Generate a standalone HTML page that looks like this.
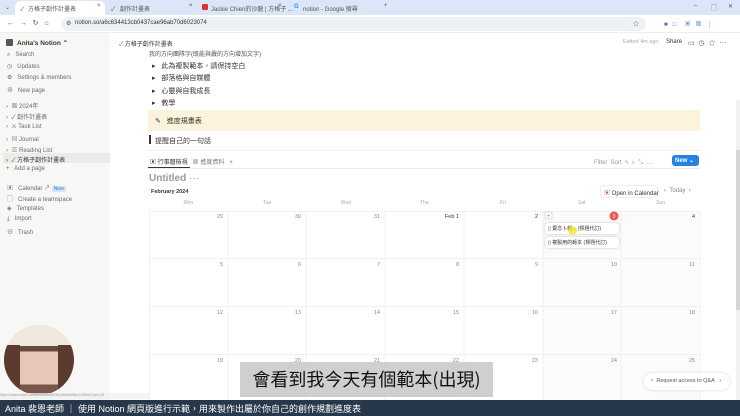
<!DOCTYPE html>
<html><head><meta charset="utf-8">
<style>
*{margin:0;padding:0;box-sizing:border-box}
body{width:740px;height:416px;overflow:hidden;position:relative;background:#fff;font-family:"Liberation Sans","Noto Sans CJK TC",sans-serif;color:#37352f}
.a{position:absolute}
.t{font-size:6px;color:#555;white-space:nowrap}
.s{font-size:6px;color:#6b6b6b;white-space:nowrap}
.m{font-size:7px;color:#37352f;white-space:nowrap}
</style></head><body>
<div class="a" style="left:0;top:0;width:740px;height:15px;background:#dbe6f8"></div>
<div class="a t" style="left:5px;top:4px">⌄</div>
<div class="a" style="left:15px;top:1px;width:90px;height:14px;background:#fff;border-radius:5px 5px 0 0"></div>
<div class="a t" style="left:20px;top:4px;color:#c44">✓</div>
<div class="a t" style="left:28px;top:4px">方格子創作計畫表</div>
<div class="a t" style="left:97px;top:3px">×</div>
<div class="a t" style="left:111px;top:4px">✓</div>
<div class="a t" style="left:120px;top:4px">創作計畫表</div>
<div class="a t" style="left:189px;top:3px">×</div>
<div class="a" style="left:202px;top:4px;width:6px;height:6px;background:#d33;border-radius:1px"></div>
<div class="a t" style="left:211px;top:4px">Jackie Chien的沙龍 | 方格子 ...</div>
<div class="a t" style="left:278px;top:3px">×</div>
<div class="a t" style="left:294px;top:4px;color:#4285f4;font-weight:bold">G</div>
<div class="a t" style="left:303px;top:4px">notion - Google 搜尋</div>
<div class="a t" style="left:384px;top:3px">+</div>
<div class="a t" style="left:694px;top:3px">–</div>
<div class="a t" style="left:711px;top:3px">▢</div>
<div class="a t" style="left:728px;top:3px">✕</div>
<div class="a" style="left:0;top:15px;width:740px;height:18px;background:#fff;border-bottom:1px solid #eee"></div>
<div class="a t" style="left:7px;top:19px;font-size:7px">←&nbsp;&nbsp;&nbsp;→&nbsp;&nbsp;&nbsp;↻&nbsp;&nbsp;&nbsp;⌂</div>
<div class="a" style="left:61px;top:17px;width:585px;height:14px;background:#eef1f5;border-radius:7px"></div>
<div class="a t" style="left:66px;top:20px">⚙</div>
<div class="a t" style="left:75px;top:20px;color:#333">notion.so/a6c634413cb0437cae96ab70d6023074</div>
<div class="a t" style="left:633px;top:19px">☆</div>
<div class="a t" style="left:664px;top:19px;color:#4472c4">■&nbsp;&nbsp;&nbsp;□&nbsp;&nbsp;&nbsp;&nbsp;&nbsp;▣&nbsp;&nbsp;&nbsp;▦&nbsp;&nbsp;&nbsp;⋮</div>
<div class="a" style="left:0;top:33px;width:110px;height:367px;background:#f7f7f5"></div>
<div class="a" style="left:6px;top:39px;width:7px;height:7px;background:#555;border-radius:1px"></div>
<div class="a m" style="left:17px;top:39px;font-weight:bold;font-size:6.5px">Anita's Notion ⌃</div>
<div class="a s" style="left:7px;top:52px">⌕&nbsp;&nbsp;&nbsp;Search</div>
<div class="a s" style="left:7px;top:63px">◷&nbsp;&nbsp;&nbsp;Updates</div>
<div class="a s" style="left:7px;top:74px">⚙&nbsp;&nbsp;&nbsp;Settings &amp; members</div>
<div class="a s" style="left:7px;top:85px">⊕&nbsp;&nbsp;&nbsp;New page</div>
<div class="a s" style="left:6px;top:101px">›&nbsp; ▦ 2024年</div>
<div class="a s" style="left:6px;top:112px">›&nbsp; ✓ 創作計畫表</div>
<div class="a s" style="left:6px;top:123px">›&nbsp; ⚔ Task List</div>
<div class="a s" style="left:6px;top:134px">›&nbsp; ▤ Journal</div>
<div class="a s" style="left:6px;top:145px">›&nbsp; ▥ Reading List</div>
<div class="a" style="left:3px;top:153px;width:107px;height:10px;background:#ebebea"></div>
<div class="a s" style="left:6px;top:155px;color:#37352f">›&nbsp; <span style="color:#c44">✓</span> 方格子創作計畫表</div>
<div class="a s" style="left:6px;top:166px">+&nbsp;&nbsp; Add a page</div>
<div class="a s" style="left:7px;top:183px">▣&nbsp;&nbsp;&nbsp;Calendar ↗ <span style="background:#d3e5f7;color:#2383e2;padding:0 2px;font-size:5px">New</span></div>
<div class="a s" style="left:7px;top:194px">▢&nbsp;&nbsp;&nbsp;Create a teamspace</div>
<div class="a s" style="left:7px;top:205px">◈&nbsp;&nbsp;&nbsp;Templates</div>
<div class="a s" style="left:7px;top:216px">⤓&nbsp;&nbsp;&nbsp;Import</div>
<div class="a s" style="left:7px;top:227px">⊖&nbsp;&nbsp;&nbsp;Trash</div>
<div class="a m" style="left:119px;top:39px;font-size:6px"><span style="color:#c44">✓</span> 方格子創作計畫表</div>
<div class="a s" style="left:623px;top:39px;color:#aaa;font-size:5.5px">Edited 4m ago</div>
<div class="a s" style="left:666px;top:39px;color:#37352f">Share</div>
<div class="a s" style="left:688px;top:38px;font-size:7px;color:#555">▭&nbsp;&nbsp;◷&nbsp;&nbsp;☆&nbsp;&nbsp;⋯</div>
<div class="a s" style="left:149px;top:49px;color:#555">我的方向團隊字(既能與嚴的方向增加文字)</div>
<div class="a m" style="left:152px;top:61px">▸&nbsp;&nbsp; 此為複製範本，請保持空白</div>
<div class="a m" style="left:152px;top:73px">▸&nbsp;&nbsp; 部落格與自媒體</div>
<div class="a m" style="left:152px;top:86px">▸&nbsp;&nbsp; 心靈與自我成長</div>
<div class="a m" style="left:152px;top:98px">▸&nbsp;&nbsp; 教學</div>
<div class="a" style="left:148px;top:110px;width:552px;height:21px;background:#fbf3db"></div>
<div class="a m" style="left:155px;top:116px">✎&nbsp;&nbsp; 進度規畫表</div>
<div class="a" style="left:149px;top:135px;width:1.5px;height:9px;background:#37352f"></div>
<div class="a m" style="left:155px;top:136px">提醒自己的一句話</div>
<div class="a" style="left:148px;top:150px;width:552px;height:1px;background:#eee"></div>
<div class="a s" style="left:150px;top:157px;color:#37352f">▣ 行事曆檢視&nbsp;&nbsp;&nbsp;<span style="color:#777">▦ 進度資料&nbsp;&nbsp;&nbsp;+</span></div>
<div class="a" style="left:148px;top:167px;width:42px;height:1.5px;background:#37352f"></div>
<div class="a" style="left:148px;top:168px;width:552px;height:1px;background:#eee"></div>
<div class="a s" style="left:594px;top:157px;color:#999">Filter&nbsp; Sort&nbsp; ϟ&nbsp; ⌕&nbsp; ⤡&nbsp; ⋯</div>
<div class="a" style="left:672px;top:155px;width:27px;height:11px;background:#2383e2;border-radius:3px;color:#fff;font-size:6px;font-weight:bold;padding:2px 0 0 3px">New&nbsp;⌄</div>
<div class="a" style="left:149px;top:173px;font-size:10px;font-weight:bold;color:#9b9a97">Untitled <span style="font-weight:normal">···</span></div>
<div class="a s" style="left:151px;top:189px;color:#37352f;font-weight:bold;font-size:5.5px">February 2024</div>
<div class="a" style="left:600px;top:185px;width:58px;height:13px;border:1px solid #eee;border-radius:3px"></div>
<div class="a s" style="left:604px;top:188px;color:#37352f"><span style="color:#c44">▣</span> Open in Calendar</div>
<div class="a s" style="left:664px;top:188px;color:#888">‹&nbsp;&nbsp;Today&nbsp;&nbsp;›</div>
<div class="a" style="left:149px;top:200px;width:551px;height:200px">
<div style="position:absolute;left:0;top:0;width:551px;display:flex;font-size:5px;color:#aaa">
<div style="width:78.7px;text-align:center">Mon</div><div style="width:78.7px;text-align:center">Tue</div><div style="width:78.7px;text-align:center">Wed</div><div style="width:78.7px;text-align:center">Thu</div><div style="width:78.7px;text-align:center">Fri</div><div style="width:78.7px;text-align:center">Sat</div><div style="width:78.7px;text-align:center">Sun</div></div>
<div style="position:absolute;left:393.5px;top:11px;width:157.5px;height:189px;background:#fbfbfa"></div>
</div>
<svg class="a" style="left:149px;top:211px" width="552" height="189">
<g stroke="#f0f0ef" stroke-width="1">
<line x1="0" y1="0.5" x2="551" y2="0.5"/><line x1="0" y1="47.5" x2="551" y2="47.5"/><line x1="0" y1="95.5" x2="551" y2="95.5"/><line x1="0" y1="143.5" x2="551" y2="143.5"/>
<line x1="0.5" y1="0" x2="0.5" y2="189"/><line x1="79" y1="0" x2="79" y2="189"/><line x1="157" y1="0" x2="157" y2="189"/><line x1="236" y1="0" x2="236" y2="189"/><line x1="315" y1="0" x2="315" y2="189"/><line x1="394" y1="0" x2="394" y2="189"/><line x1="472" y1="0" x2="472" y2="189"/><line x1="551" y1="0" x2="551" y2="189"/>
</g>
<g font-family="Liberation Sans" font-size="5.5" fill="#888" text-anchor="end">
<text x="74" y="7">29</text><text x="152" y="7">30</text><text x="231" y="7">31</text><text x="310" y="7" fill="#37352f">Feb 1</text><text x="389" y="7" fill="#37352f">2</text><text x="546" y="7" fill="#37352f">4</text>
<text x="74" y="55">5</text><text x="152" y="55">6</text><text x="231" y="55">7</text><text x="310" y="55">8</text><text x="389" y="55">9</text><text x="468" y="55">10</text><text x="546" y="55">11</text>
<text x="74" y="103">12</text><text x="152" y="103">13</text><text x="231" y="103">14</text><text x="310" y="103">15</text><text x="389" y="103">16</text><text x="468" y="103">17</text><text x="546" y="103">18</text>
<text x="74" y="151">19</text><text x="152" y="151">20</text><text x="231" y="151">21</text><text x="310" y="151">22</text><text x="389" y="151">23</text><text x="468" y="151">24</text><text x="546" y="151">25</text>
</g>
<circle cx="465" cy="5" r="4.5" fill="#eb5757"/><text x="465" y="7" font-size="5" fill="#fff" text-anchor="middle" font-family="Liberation Sans">3</text>
<rect x="396" y="1" width="7" height="7" rx="1" fill="none" stroke="#ccc" stroke-width="0.6"/><text x="399.5" y="7" font-size="6" fill="#999" text-anchor="middle">+</text>
</svg>
<div class="a" style="left:545px;top:223px;width:74px;height:11px;background:#fff;border-radius:3px;box-shadow:0 0 2px rgba(0,0,0,.25)"></div>
<div class="a s" style="left:548px;top:225px;font-size:5px;color:#37352f">▯ 賣念卜範... (標題代訂)</div>
<div class="a" style="left:568px;top:226px;width:9px;height:9px;border-radius:50%;background:rgba(240,230,20,.7)"></div>
<div class="a" style="left:545px;top:237px;width:74px;height:11px;background:#fff;border-radius:3px;box-shadow:0 0 2px rgba(0,0,0,.25)"></div>
<div class="a s" style="left:548px;top:239px;font-size:5px;color:#37352f">▯ 複製用的範本 (標題代訂)</div>
<div class="a" style="left:736px;top:100px;width:4px;height:300px;background:#f1f1f1"></div>
<div class="a" style="left:736px;top:150px;width:4px;height:160px;background:#d6d6d6"></div>
<div class="a" style="left:644px;top:373px;width:86px;height:17px;border-radius:9px;background:#fff;box-shadow:0 0 3px rgba(0,0,0,.15)"></div>
<div class="a s" style="left:650px;top:378px;font-size:5.5px;color:#555">◔&nbsp; Request access to Q&amp;A&nbsp;&nbsp; ›</div>
<div class="a" style="left:4px;top:325px;width:70px;height:70px;border-radius:50%;background:linear-gradient(#efe8dc 0 30%,#6b4a3e 30% 38%,#e8c7b8 38% 85%,#7a5548 85%);overflow:hidden">
<div style="position:absolute;left:0;top:20px;width:16px;height:50px;background:#5a3b30"></div>
<div style="position:absolute;left:54px;top:20px;width:16px;height:50px;background:#5a3b30"></div>
</div>
<div class="a" style="left:0;top:393px;width:150px;height:6px;font-size:3.5px;color:#99a;background:rgba(240,240,240,.8);overflow:hidden;white-space:nowrap">https://www.notion.so/9ac33c8b682461d8e8698ae11284i2?pvs=25</div>
<div class="a" style="left:240px;top:362px;width:253px;height:35px;background:#cfcfcf"></div>
<div class="a" style="left:240px;top:366px;width:253px;text-align:center;font-size:18px;color:#111;font-family:'Noto Sans CJK TC',sans-serif;line-height:26px;white-space:nowrap">會看到我今天有個範本(出現)</div>
<div class="a" style="left:0;top:400px;width:740px;height:16px;background:#27384a"></div>
<div class="a" style="left:5px;top:402px;font-size:9px;color:#fff;white-space:nowrap">Anita 裴恩老師 ｜ 使用 Notion 網頁版進行示範，用來製作出屬於你自己的創作規劃進度表</div>
</body></html>
